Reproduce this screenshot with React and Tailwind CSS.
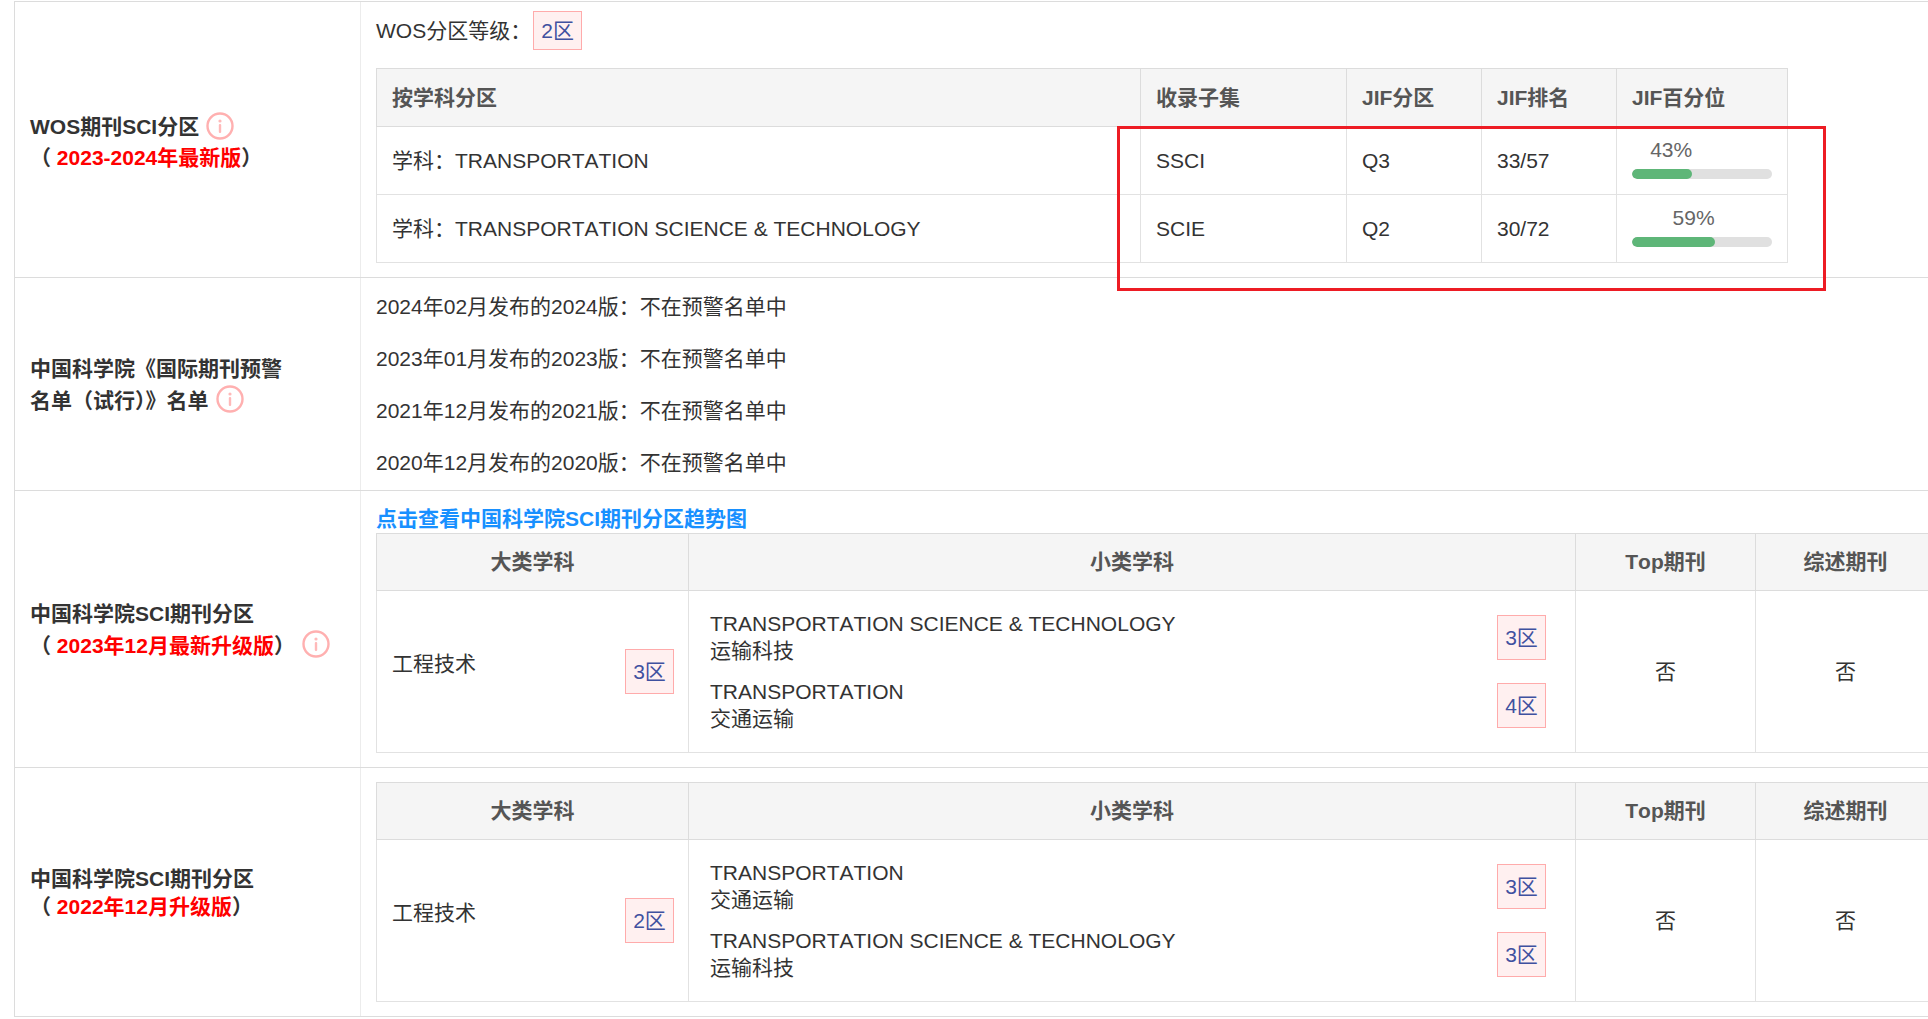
import React from "react";

const FONT = "font-['Liberation_Sans','Noto_Sans_CJK_SC',sans-serif]";
const COLON = "\uFF1A";
const LP = "\uFF08";
const RP = "\uFF09";

function InfoIcon({ className = "" }) {
  return (
    <svg viewBox="0 0 28 28" className={`inline-block w-[28px] h-[28px] align-middle -translate-y-[3px] ${className}`}>
      <circle cx="14" cy="14" r="12.5" fill="none" stroke="#ffb0b0" strokeWidth="2.4" />
      <circle cx="14" cy="9" r="1.6" fill="#ffb9b9" />
      <rect x="12.8" y="12" width="2.4" height="9" rx="1" fill="#ffb9b9" />
    </svg>
  );
}

function Tag({ children, small }) {
  return (
    <span
      className={`inline-block w-[49px] shrink-0 text-center border border-[#ffabab] bg-[#fff0f0] text-[#3f51a0] ${
        small ? "h-[39px] leading-[37px]" : "h-[45px] leading-[43px]"
      }`}
    >
      {children}
    </span>
  );
}

function Row({ label, leading, children, className = "" }) {
  return (
    <div className={`flex border-b border-[#dcdcdc] ${className}`}>
      <div className="w-[345px] shrink-0 flex items-center pl-[15px] font-bold text-[#333]">
        <div className={leading}>{label}</div>
      </div>
      <div className="flex-1 min-w-0 border-l border-[#ececec] px-[15px]">{children}</div>
    </div>
  );
}

function Progress({ pct }) {
  return (
    <div className="h-[67px] pt-[9px]">
      <div className="h-[28px] leading-[28px] text-right text-[#666]" style={{ width: `${pct}%` }}>
        {pct}%
      </div>
      <div className="mt-[5px] h-[10px] rounded-[5px] bg-[#e0e0e0] overflow-hidden">
        <div className="h-full rounded-[5px] bg-[#5eb678]" style={{ width: `${pct}%` }} />
      </div>
    </div>
  );
}

function WosTable() {
  const th = "border border-[#dcdcdc] bg-[#f5f5f5] px-[15px] text-left font-bold text-[#555]";
  const td = "border border-[#e2e2e2] px-[15px] text-[#333]";
  const rows = [
    ["TRANSPORTATION", "SSCI", "Q3", "33/57", 43],
    ["TRANSPORTATION SCIENCE & TECHNOLOGY", "SCIE", "Q2", "30/72", 59],
  ];
  return (
    <table className="table-fixed w-[1411px] mt-[18px] leading-[28px]">
      <colgroup>
        <col className="w-[764px]" />
        <col className="w-[206px]" />
        <col className="w-[135px]" />
        <col className="w-[135px]" />
        <col className="w-[171px]" />
      </colgroup>
      <thead>
        <tr className="h-[58px]">
          <th className={th}>按学科分区</th>
          <th className={th}>收录子集</th>
          <th className={th}>JIF分区</th>
          <th className={th}>JIF排名</th>
          <th className={th}>JIF百分位</th>
        </tr>
      </thead>
      <tbody>
        {rows.map((r) => (
          <tr key={r[0]} className="h-[68px]">
            <td className={td}>
              学科{COLON}
              {r[0]}
            </td>
            <td className={td}>{r[1]}</td>
            <td className={td}>{r[2]}</td>
            <td className={td}>{r[3]}</td>
            <td className={td}>
              <Progress pct={r[4]} />
            </td>
          </tr>
        ))}
      </tbody>
    </table>
  );
}

function CasTable({ bigTag, items }) {
  const th = "border border-[#dcdcdc] bg-[#f5f5f5] text-center font-bold text-[#555]";
  const td = "border border-[#e2e2e2] text-[#333]";
  return (
    <table className="table-fixed w-[1559px]">
      <colgroup>
        <col className="w-[312px]" />
        <col className="w-[887px]" />
        <col className="w-[180px]" />
        <col className="w-[180px]" />
      </colgroup>
      <thead>
        <tr className="h-[57px]">
          <th className={th}>大类学科</th>
          <th className={th}>小类学科</th>
          <th className={th}>Top期刊</th>
          <th className={th}>综述期刊</th>
        </tr>
      </thead>
      <tbody>
        <tr className="h-[162px]">
          <td className={`${td} pl-[15px] pr-[14px]`}>
            <div className="flex items-center justify-between">
              <span className="mb-[16px]">工程技术</span>
              <Tag>{bigTag}</Tag>
            </div>
          </td>
          <td className={`${td} pl-[21px] pr-[29px]`}>
            <div className="flex flex-col gap-[12px]">
              {items.map((it) => (
                <div key={it[0]} className="flex items-center justify-between">
                  <div className="leading-[27px] mb-[2px]">
                    <div>{it[0]}</div>
                    <div>{it[1]}</div>
                  </div>
                  <Tag>{it[2]}</Tag>
                </div>
              ))}
            </div>
          </td>
          <td className={`${td} text-center`}>否</td>
          <td className={`${td} text-center`}>否</td>
        </tr>
      </tbody>
    </table>
  );
}

const Red = ({ children }) => <span className="text-[#ff0000]">{children}</span>;

export default function App() {
  const tse = "TRANSPORTATION SCIENCE & TECHNOLOGY";
  return (
    <div className={`relative w-[1928px] h-[1019px] overflow-hidden bg-white text-[21px] [font-kerning:none] ${FONT}`}>
      <div className="ml-[14px] mt-[1px] w-[1914px] border-t border-l border-[#dcdcdc]">
        <Row
          className="h-[276px]"
          leading="leading-[29px] pt-[5px]"
          label={
            <>
              <div>
                WOS期刊SCI分区
                <InfoIcon className="ml-[7px]" />
              </div>
              <div>
                {LP} <Red>2023-2024年最新版</Red>
                {RP}
              </div>
            </>
          }
        >
          <div className="pt-[9px]">
            <div className="flex items-center gap-[2px] text-[#333]">
              <span>WOS分区等级{COLON}</span>
              <Tag small>2区</Tag>
            </div>
            <WosTable />
          </div>
        </Row>

        <Row
          className="h-[213px]"
          leading="leading-[32px] pt-[2px]"
          label={
            <>
              <div>中国科学院《国际期刊预警</div>
              <div>
                名单{LP}试行{RP}》名单
                <InfoIcon className="ml-[7px]" />
              </div>
            </>
          }
        >
          <div className="pt-[3px] text-[#333]">
            {["2024年02月发布的2024版", "2023年01月发布的2023版", "2021年12月发布的2021版", "2020年12月发布的2020版"].map((t) => (
              <div key={t} className="h-[52px] leading-[52px]">
                {t}
                {COLON}不在预警名单中
              </div>
            ))}
          </div>
        </Row>

        <Row
          className="h-[277px]"
          leading="leading-[32px] pt-[2px]"
          label={
            <>
              <div>中国科学院SCI期刊分区</div>
              <div>
                {LP} <Red>2023年12月最新升级版</Red>
                {RP}
                <InfoIcon className="ml-[7px]" />
              </div>
            </>
          }
        >
          <div className="pt-[14px]">
            <div className="h-[28px] leading-[28px] font-bold text-[#1890ff]">点击查看中国科学院SCI期刊分区趋势图</div>
            <CasTable
              bigTag="3区"
              items={[
                [tse, "运输科技", "3区"],
                ["TRANSPORTATION", "交通运输", "4区"],
              ]}
            />
          </div>
        </Row>

        <Row
          className="h-[249px]"
          leading="leading-[28px] pt-[2px]"
          label={
            <>
              <div>中国科学院SCI期刊分区</div>
              <div>
                {LP} <Red>2022年12月升级版</Red>
                {RP}
              </div>
            </>
          }
        >
          <div className="pt-[14px]">
            <CasTable
              bigTag="2区"
              items={[
                ["TRANSPORTATION", "交通运输", "3区"],
                [tse, "运输科技", "3区"],
              ]}
            />
          </div>
        </Row>
      </div>

      <div className="absolute left-[1117px] top-[126px] w-[709px] h-[165px] border-[3px] border-[#ed1c24]" />
    </div>
  );
}
